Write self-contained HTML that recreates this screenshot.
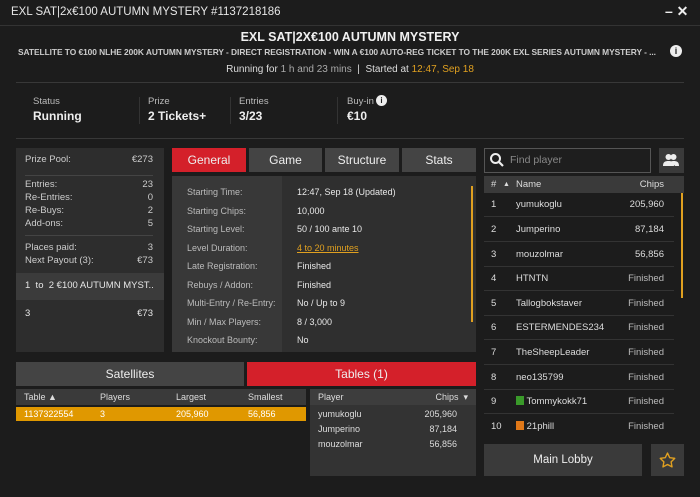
<!DOCTYPE html>
<html><head><meta charset="utf-8"><style>
*{margin:0;padding:0;box-sizing:border-box}
body{width:700px;height:497px;background:#1c1c1c;font-family:"Liberation Sans",sans-serif;color:#ddd;position:relative;overflow:hidden;font-size:10px}
.a{position:absolute;white-space:nowrap}
.hl{position:absolute;height:1px;background:#383838}
.tab{position:absolute;top:148px;height:24px;background:#444;color:#eee;font-size:12px;text-align:center;line-height:24px}
.lp div{position:absolute;left:9px;width:128px;font-size:9.5px;color:#ccc;white-space:nowrap}
.lp span{position:absolute;right:0}
.ir{position:absolute;left:187px;font-size:9px;color:#bbb}
.iv{position:absolute;left:297px;font-size:9px;color:#e8e8e8}
.pr{position:absolute;left:484px;width:190px;height:24px;border-bottom:1px solid #333;font-size:9.5px;line-height:24px;color:#ddd}
.pr .n{position:absolute;left:7px}.pr .m{position:absolute;left:32px}.pr .c{position:absolute;right:10px}
</style></head><body>
<div class="a" style="left:11px;top:6px;font-size:11.5px;color:#e6e6e6">EXL SAT|2x€100 AUTUMN MYSTERY #1137218186</div>
<div class="a" style="left:665px;top:3px;font-size:14px;font-weight:bold;color:#eee">– ✕</div>
<div class="hl" style="left:0;top:25px;width:700px;background:#333"></div>
<div class="a" style="left:0;width:700px;text-align:center;top:30px;font-size:12.5px;font-weight:bold;color:#f0f0f0">EXL SAT|2X€100 AUTUMN MYSTERY</div>
<div class="a" style="left:18px;top:47px;font-size:8.4px;font-weight:bold;color:#ccc;letter-spacing:-0.05px">SATELLITE TO €100 NLHE 200K AUTUMN MYSTERY - DIRECT REGISTRATION - WIN A €100 AUTO-REG TICKET TO THE 200K EXL SERIES AUTUMN MYSTERY - ...</div>
<div class="a" style="left:670px;top:45px;width:12px;height:12px;border-radius:50%;background:#eee;color:#222;font-size:9px;font-weight:bold;text-align:center;line-height:12px">i</div>
<div class="a" style="left:0;width:700px;text-align:center;top:64px;font-size:10px;color:#ddd">Running for <span style="color:#aaa">1 h and 23 mins</span> &nbsp;| &nbsp;Started at <span style="color:#e0a020">12:47, Sep 18</span></div>
<div class="hl" style="left:16px;top:82px;width:668px"></div>
<div class="a" style="left:33px;top:96px;font-size:9.5px;color:#bbb">Status</div>
<div class="a" style="left:33px;top:109px;font-size:12px;font-weight:bold;color:#eee">Running</div>
<div class="a" style="left:148px;top:96px;font-size:9.5px;color:#bbb">Prize</div>
<div class="a" style="left:148px;top:109px;font-size:12px;font-weight:bold;color:#eee">2 Tickets+</div>
<div class="a" style="left:239px;top:96px;font-size:9.5px;color:#bbb">Entries</div>
<div class="a" style="left:239px;top:109px;font-size:12px;font-weight:bold;color:#eee">3/23</div>
<div class="a" style="left:347px;top:96px;font-size:9.5px;color:#bbb">Buy-in</div>
<div class="a" style="left:376px;top:95px;width:11px;height:11px;border-radius:50%;background:#eee;color:#222;font-size:8px;font-weight:bold;text-align:center;line-height:11px">i</div>
<div class="a" style="left:347px;top:109px;font-size:12px;font-weight:bold;color:#eee">€10</div>
<div class="a" style="left:139px;top:97px;width:1px;height:27px;background:#333"></div>
<div class="a" style="left:230px;top:97px;width:1px;height:27px;background:#333"></div>
<div class="a" style="left:337px;top:97px;width:1px;height:27px;background:#333"></div>
<div class="hl" style="left:16px;top:138px;width:668px"></div>

<div class="a lp" style="left:16px;top:148px;width:148px;height:204px;background:#2d2d2d">
<div style="top:6px">Prize Pool:<span>€273</span></div>
<div style="top:27px;height:1px;background:#444"></div>
<div style="top:31px">Entries:<span>23</span></div>
<div style="top:44px">Re-Entries:<span>0</span></div>
<div style="top:57px">Re-Buys:<span>2</span></div>
<div style="top:70px">Add-ons:<span>5</span></div>
<div style="top:87px;height:1px;background:#444"></div>
<div style="top:94px">Places paid:<span>3</span></div>
<div style="top:107px">Next Payout (3):<span>€73</span></div>
<div style="left:0;top:125px;width:148px;height:27px;background:#3b3b3b"></div>
<div style="top:132px;color:#e6e6e6;overflow:hidden">1 &nbsp;to &nbsp;2 €100 AUTUMN MYST...</div>
<div style="top:160px;color:#e6e6e6">3<span>€73</span></div>
</div>

<div class="tab" style="left:172px;width:74px;background:#d4202a">General</div>
<div class="tab" style="left:249px;width:73px">Game</div>
<div class="tab" style="left:325px;width:74px">Structure</div>
<div class="tab" style="left:402px;width:74px">Stats</div>
<div class="a" style="left:172px;top:176px;width:304px;height:176px;background:#2f2f2f"></div>
<div class="a" style="left:172px;top:176px;width:110px;height:176px;background:#383838"></div>
<div class="a" style="left:471px;top:186px;width:2px;height:136px;background:#e0a020"></div>
<div style="position:absolute;left:0;top:0;width:476px;height:346px;overflow:hidden">
<div class="ir" style="top:187px">Starting Time:</div><div class="iv" style="top:187px">12:47, Sep 18 (Updated)</div>
<div class="ir" style="top:206px">Starting Chips:</div><div class="iv" style="top:206px">10,000</div>
<div class="ir" style="top:224px">Starting Level:</div><div class="iv" style="top:224px">50 / 100 ante 10</div>
<div class="ir" style="top:243px">Level Duration:</div><div class="iv" style="top:243px;color:#e0a020;text-decoration:underline">4 to 20 minutes</div>
<div class="ir" style="top:261px">Late Registration:</div><div class="iv" style="top:261px">Finished</div>
<div class="ir" style="top:280px">Rebuys / Addon:</div><div class="iv" style="top:280px">Finished</div>
<div class="ir" style="top:298px">Multi-Entry / Re-Entry:</div><div class="iv" style="top:298px">No / Up to 9</div>
<div class="ir" style="top:317px">Min / Max Players:</div><div class="iv" style="top:317px">8 / 3,000</div>
<div class="ir" style="top:335px">Knockout Bounty:</div><div class="iv" style="top:335px">No</div>
</div>

<div class="a" style="left:16px;top:362px;width:228px;height:24px;background:#444;color:#eee;font-size:12px;text-align:center;line-height:24px">Satellites</div>
<div class="a" style="left:247px;top:362px;width:229px;height:24px;background:#d4202a;color:#eee;font-size:12px;text-align:center;line-height:24px">Tables (1)</div>
<div class="a" style="left:16px;top:389px;width:290px;height:16px;background:#3a3a3a;font-size:9px;line-height:16px;color:#ddd">
<span class="a" style="left:8px">Table ▲</span><span class="a" style="left:84px">Players</span><span class="a" style="left:160px">Largest</span><span class="a" style="left:232px">Smallest</span></div>
<div class="a" style="left:16px;top:407px;width:290px;height:14px;background:#e09800;font-size:9px;line-height:14px;color:#fff">
<span class="a" style="left:8px">1137322554</span><span class="a" style="left:84px">3</span><span class="a" style="left:160px">205,960</span><span class="a" style="left:232px">56,856</span></div>
<div class="a" style="left:310px;top:389px;width:166px;height:87px;background:#333"></div>
<div class="a" style="left:310px;top:389px;width:166px;height:16px;background:#3d3d3d;font-size:9px;line-height:16px">
<span class="a" style="left:8px">Player</span><span class="a" style="right:8px">Chips &nbsp;▾</span></div>
<div class="a" style="left:318px;top:409px;font-size:9px">yumukoglu</div><div class="a" style="left:420px;width:37px;text-align:right;top:409px;font-size:9px">205,960</div>
<div class="a" style="left:318px;top:424px;font-size:9px">Jumperino</div><div class="a" style="left:420px;width:37px;text-align:right;top:424px;font-size:9px">87,184</div>
<div class="a" style="left:318px;top:439px;font-size:9px">mouzolmar</div><div class="a" style="left:420px;width:37px;text-align:right;top:439px;font-size:9px">56,856</div>

<div class="a" style="left:484px;top:148px;width:167px;height:25px;border:1px solid #555;background:#1e1e1e"></div>
<svg class="a" style="left:489px;top:152px" width="16" height="16" viewBox="0 0 16 16"><circle cx="6.5" cy="6.5" r="4.5" fill="none" stroke="#eee" stroke-width="2"/><path d="M10 10l4 4" stroke="#eee" stroke-width="2.2"/></svg>
<div class="a" style="left:510px;top:154px;font-size:10.5px;color:#888">Find player</div>
<div class="a" style="left:659px;top:148px;width:25px;height:25px;background:#3a3a3a"></div>
<svg class="a" style="left:663px;top:153px" width="16" height="14" viewBox="0 0 16 14"><circle cx="5.5" cy="4" r="3" fill="#eee"/><circle cx="10.5" cy="4" r="3" fill="#eee"/><path d="M0 13c0-4 2-5 5.5-5s5.5 1 5.5 5z M8 8.5c1-.4 1.8-.5 2.5-.5 3.5 0 5.5 1 5.5 5h-4" fill="#eee"/></svg>
<div class="a" style="left:484px;top:176px;width:200px;height:17px;background:#3a3a3a;font-size:9.5px;line-height:17px">
<span class="a" style="left:7px">#</span><span class="a" style="left:19px;font-size:7px">▲</span><span class="a" style="left:32px">Name</span><span class="a" style="right:20px">Chips</span></div>
<div class="a" style="left:681px;top:193px;width:2px;height:105px;background:#e0a020"></div>
<div class="pr" style="top:193px"><span class="n">1</span><span class="m">yumukoglu</span><span class="c">205,960</span></div>
<div class="pr" style="top:218px"><span class="n">2</span><span class="m">Jumperino</span><span class="c">87,184</span></div>
<div class="pr" style="top:243px"><span class="n">3</span><span class="m">mouzolmar</span><span class="c">56,856</span></div>
<div class="pr" style="top:267px"><span class="n">4</span><span class="m">HTNTN</span><span class="c" style="color:#bbb">Finished</span></div>
<div class="pr" style="top:292px"><span class="n">5</span><span class="m">Tallogbokstaver</span><span class="c" style="color:#bbb">Finished</span></div>
<div class="pr" style="top:316px"><span class="n">6</span><span class="m">ESTERMENDES234</span><span class="c" style="color:#bbb">Finished</span></div>
<div class="pr" style="top:341px"><span class="n">7</span><span class="m">TheSheepLeader</span><span class="c" style="color:#bbb">Finished</span></div>
<div class="pr" style="top:366px"><span class="n">8</span><span class="m">neo135799</span><span class="c" style="color:#bbb">Finished</span></div>
<div class="pr" style="top:390px"><span class="n">9</span><span class="m"><span style="display:inline-block;width:8px;height:9px;background:#3a9a2a;vertical-align:-1px"></span> Tommykokk71</span><span class="c" style="color:#bbb">Finished</span></div>
<div class="pr" style="top:415px;border:none"><span class="n">10</span><span class="m"><span style="display:inline-block;width:8px;height:9px;background:#e07818;vertical-align:-1px"></span> 21phill</span><span class="c" style="color:#bbb">Finished</span></div>
<div class="a" style="left:484px;top:444px;width:158px;height:32px;background:#3a3a3a;font-size:11.5px;text-align:center;line-height:32px;color:#eee">Main Lobby</div>
<div class="a" style="left:651px;top:444px;width:33px;height:32px;background:#3a3a3a"></div>
<svg class="a" style="left:659px;top:452px" width="17" height="16" viewBox="0 0 24 23"><path d="M12 1.5l3.2 6.6 7.2 1-5.2 5.1 1.3 7.2L12 18l-6.5 3.4 1.3-7.2L1.6 9.1l7.2-1z" fill="none" stroke="#e0a020" stroke-width="2" stroke-linejoin="round"/></svg>
</body></html>
